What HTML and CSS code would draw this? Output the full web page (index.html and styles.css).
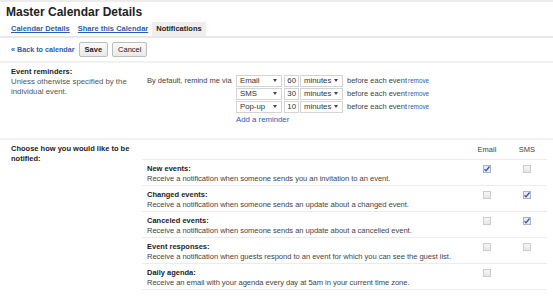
FILE: index.html
```html
<!DOCTYPE html>
<html lang="en">
<head>
    <meta charset="UTF-8">
    <title>Master Calendar Details</title>
    <link rel="stylesheet" href="styles.css">
</head>
<body>
    <div class="topbar"></div>
    <h1 class="title">Master Calendar Details</h1>

    <div class="tabs">
        <a class="tab" href="#">Calendar Details</a>
        <a class="tab" href="#">Share this Calendar</a>
        <span class="tab tab-active">Notifications</span>
    </div>

    <div class="actions">
        <a class="back" href="#">&laquo; Back to calendar</a>
        <button class="btn btn-save">Save</button>
        <button class="btn">Cancel</button>
    </div>

    <!-- Reminders -->
    <div class="section reminders">
        <div class="label">
            <div class="label-title">Event reminders:</div>
            <div class="label-desc">Unless otherwise specified by the individual event.</div>
        </div>
        <div class="reminder-body">
            <div class="lead">By default, remind me via</div>
            <div class="reminder-list">
                <div class="reminder">
                    <span class="dropdown method">Email<i class="arrow"></i></span>
                    <span class="num">60</span>
                    <span class="dropdown unit">minutes<i class="arrow"></i></span>
                    <span class="before">before each event</span>
                    <a class="remove" href="#">remove</a>
                </div>
                <div class="reminder">
                    <span class="dropdown method">SMS<i class="arrow"></i></span>
                    <span class="num">30</span>
                    <span class="dropdown unit">minutes<i class="arrow"></i></span>
                    <span class="before">before each event</span>
                    <a class="remove" href="#">remove</a>
                </div>
                <div class="reminder">
                    <span class="dropdown method">Pop-up<i class="arrow"></i></span>
                    <span class="num">10</span>
                    <span class="dropdown unit">minutes<i class="arrow"></i></span>
                    <span class="before">before each event</span>
                    <a class="remove" href="#">remove</a>
                </div>
                <a class="add" href="#">Add a reminder</a>
            </div>
        </div>
    </div>

    <!-- Notifications -->
    <div class="section notify">
        <div class="label">
            <div class="label-title">Choose how you would like to be notified:</div>
        </div>
        <table class="notify-table">
            <tr class="head">
                <th></th>
                <th class="col">Email</th>
                <th class="col">SMS</th>
            </tr>
            <tr>
                <td><div class="ev-title">New events:</div>Receive a notification when someone sends you an invitation to an event.</td>
                <td class="col"><span class="cb checked"></span></td>
                <td class="col"><span class="cb"></span></td>
            </tr>
            <tr>
                <td><div class="ev-title">Changed events:</div>Receive a notification when someone sends an update about a changed event.</td>
                <td class="col"><span class="cb"></span></td>
                <td class="col"><span class="cb checked"></span></td>
            </tr>
            <tr>
                <td><div class="ev-title">Canceled events:</div>Receive a notification when someone sends an update about a cancelled event.</td>
                <td class="col"><span class="cb"></span></td>
                <td class="col"><span class="cb checked"></span></td>
            </tr>
            <tr>
                <td><div class="ev-title">Event responses:</div>Receive a notification when guests respond to an event for which you can see the guest list.</td>
                <td class="col"><span class="cb"></span></td>
                <td class="col"><span class="cb"></span></td>
            </tr>
            <tr>
                <td><div class="ev-title">Daily agenda:</div>Receive an email with your agenda every day at 5am in your current time zone.</td>
                <td class="col"><span class="cb"></span></td>
                <td class="col"></td>
            </tr>
        </table>
    </div>
</body>
</html>
```

FILE: styles.css
```css
body {
    margin: 0;
    background: #fff;
    font-family: "Liberation Sans", Arial, sans-serif;
    font-size: 7.5px;
    color: #333;
}

a {
    color: #2a5db0;
}

.topbar {
    height: 2px;
    background: #ececec;
}

.title {
    margin: 0;
    padding: 3px 0 0 6px;
    font-size: 12px;
    line-height: 15px;
    font-weight: bold;
    color: #222;
}

.tabs {
    display: flex;
    margin-top: 2px;
    padding-left: 7px;
    border-bottom: 2px solid #e8e8e8;
}

.tab {
    padding: 0 4px;
    height: 14px;
    line-height: 14px;
    font-weight: bold;
}

.tab-active {
    background: #eeeeee;
    color: #222;
}

.actions {
    display: flex;
    align-items: center;
    gap: 4px;
    padding: 4px 11px;
    height: 15px;
    border-bottom: 2px solid #f1f1f1;
}

.back {
    font-size: 7.2px;
    font-weight: bold;
    text-decoration: none;
}

.btn {
    font-family: inherit;
    font-size: 7.5px;
    height: 15px;
    padding: 0 5px;
    border: 1px solid #bdbdbd;
    border-radius: 2px;
    background: linear-gradient(#fafafa, #e9e9e9);
    color: #222;
}

.btn-save {
    font-weight: bold;
}

.section {
    display: flex;
    padding: 4px 0 14px 11px;
    border-bottom: 2px solid #f1f1f1;
}

.label {
    width: 125px;
    flex: none;
    margin-right: 11px;
    line-height: 10px;
}

.label-title {
    font-weight: bold;
    color: #222;
}

.label-desc {
    font-size: 7.8px;
    color: #555;
}

.reminder-body {
    display: flex;
    margin-top: 7px;
}

.lead {
    width: 89px;
    white-space: nowrap;
    padding-top: 2px;
    color: #444;
}

.reminder {
    display: flex;
    align-items: center;
    height: 13px;
}

.dropdown {
    display: flex;
    align-items: center;
    justify-content: space-between;
    box-sizing: border-box;
    height: 12px;
    padding: 0 4px 0 3px;
    border: 1px solid #d4d4d4;
    background: #fff;
    font-size: 7.8px;
    color: #333;
}

.method {
    width: 46px;
}

.unit {
    width: 43px;
}

.arrow {
    width: 0;
    height: 0;
    border-left: 2px solid transparent;
    border-right: 2px solid transparent;
    border-top: 3px solid #444;
}

.num {
    box-sizing: border-box;
    width: 15px;
    height: 12px;
    line-height: 10px;
    margin: 0 1px 0 2px;
    padding-right: 2px;
    border: 1px solid #d4d4d4;
    text-align: right;
    font-size: 7.8px;
    color: #333;
}

.before {
    margin-left: 4px;
    color: #444;
}

.remove {
    font-size: 6.3px;
    text-decoration: none;
    margin-left: 1px;
}

.add {
    display: block;
    margin-top: 2px;
    font-size: 7.8px;
    text-decoration: none;
}

.notify {
    padding: 4px 0 0 11px;
    border-bottom: none;
}

.notify .label {
    width: 122px;
    margin-right: 9px;
}

.notify-table {
    width: 405px;
    margin-top: -4px;
    border-collapse: collapse;
}

.notify-table .head th {
    height: 19px;
    padding: 0;
    font-weight: normal;
    color: #444;
    vertical-align: middle;
}

.notify-table td {
    padding: 4px 5px 1px;
    border-top: 1px solid #ececec;
    border-bottom: 1px solid #ececec;
    vertical-align: top;
    line-height: 10px;
    white-space: nowrap;
    font-size: 7.6px;
    letter-spacing: -0.05px;
    color: #444;
}

.notify-table .col {
    width: 40px;
    padding-left: 0;
    padding-right: 0;
    text-align: center;
}

.notify-table td.col {
    padding-top: 5px;
}

.ev-title {
    font-size: 7.5px;
    font-weight: bold;
    letter-spacing: 0;
    color: #222;
}

.cb {
    display: inline-block;
    box-sizing: border-box;
    width: 8px;
    height: 8px;
    border: 1px solid #cdcdcd;
    background: linear-gradient(#f6f6f6, #e6e6e6);
    vertical-align: top;
}

.cb.checked {
    border-color: #a8b4cc;
    background: #e6ebf4 url("data:image/svg+xml,%3Csvg xmlns='http://www.w3.org/2000/svg' viewBox='0 0 8 8'%3E%3Cpath d='M1.5 4.2 L3 5.8 L6.5 1.5' fill='none' stroke='%23305090' stroke-width='1.2'/%3E%3C/svg%3E") center / 8px 8px no-repeat;
}
```
